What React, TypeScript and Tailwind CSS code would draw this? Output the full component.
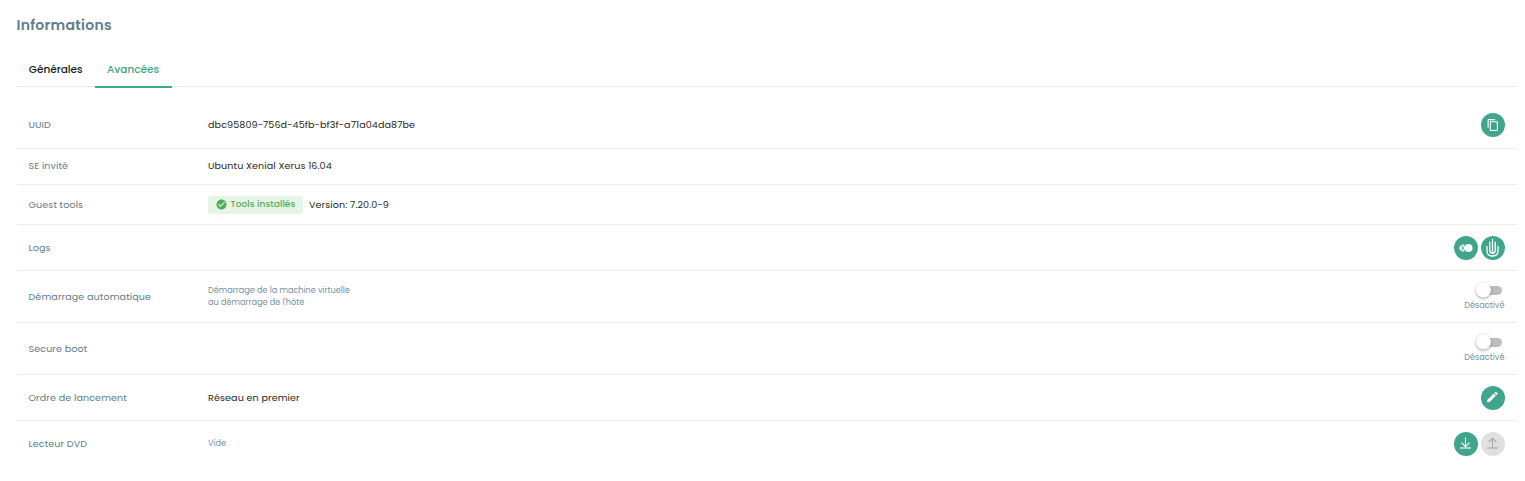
import type { ReactNode } from 'react';
import { MdOutlineContentCopy, MdEdit, MdCheckCircle } from 'react-icons/md';

function RoundButton({ label, disabled = false, children }: { label: string; disabled?: boolean; children: ReactNode }) {
  return (
    <button
      aria-label={label}
      disabled={disabled}
      className={`flex size-6 items-center justify-center rounded-full ${disabled ? 'bg-[#e0e0e0] text-[#a9a9a9]' : 'bg-[#40a58d] text-white'}`}
    >
      {children}
    </button>
  );
}

function Toggle() {
  return (
    <div className="flex w-10 flex-col items-end">
      <div className="mr-[3px] flex h-4 w-[26.5px] items-center">
        <span className="z-10 size-[15px] shrink-0 -translate-y-[0.5px] rounded-full bg-white shadow-[0_1px_3px_rgba(0,0,0,0.38)]" />
        <span className="-ml-2 h-[9px] w-5 rounded-full bg-[#bdbdbd]" />
      </div>
      <span className="mt-px mr-[0.5px] whitespace-nowrap text-[8.2px] leading-3 tracking-normal text-[#78909c]">Désactivé</span>
    </div>
  );
}

function Row({ label, height, last = false, children, actions }: {
  label: string; height: string; last?: boolean; children?: ReactNode; actions?: ReactNode;
}) {
  return (
    <div className={`flex items-center pl-3 pr-3 ${height} ${last ? '' : 'border-b border-[#ececec]'}`}>
      <div className="w-[179.5px] shrink-0 whitespace-nowrap text-[#607d8b]">{label}</div>
      <div className="flex flex-1 items-center whitespace-nowrap text-[#262626]">{children}</div>
      <div className="flex items-center gap-[3px]">{actions}</div>
    </div>
  );
}

function DiscIcon() {
  return (
    <svg width="14" height="10" viewBox="0 0 14 10">
      <circle cx="4" cy="5" r="3.6" fill="white" />
      <path d="M2 2 L5.8 8 M5.8 2 L2 8" stroke="#40a58d" strokeWidth="0.8" />
      <circle cx="9.6" cy="5" r="3.9" fill="white" />
    </svg>
  );
}

function HandIcon() {
  return (
    <svg width="14" height="20" viewBox="0 0 14 20" fill="none" stroke="white" strokeWidth="1.3" strokeLinecap="round">
      <path d="M1 8.4 V12.5 Q1 18 6.5 18 Q12 18 12 12.5 V8.4" />
      <path d="M3.8 4.2 V12.4 Q3.8 15.2 6.5 15.2 Q9.2 15.2 9.2 12.4 V4.2 M6.5 1.5 V14.8" />
    </svg>
  );
}

function ArrowIcon({ up = false }: { up?: boolean }) {
  return (
    <svg width="12" height="14" viewBox="0 0 12 14" fill="none" stroke="currentColor" strokeWidth="1.1">
      <path d={up ? 'M5.5 11 V1.3 M1.8 5 L5.5 1.3 L9.2 5' : 'M5.5 .5 V9.5 M1.5 5.6 L5.5 9.6 L9.5 5.6'} />
      <path d="M0 11 H11" strokeWidth="1.5" strokeOpacity=".75" />
    </svg>
  );
}

export default function App() {
  return (
    <main className="h-[481px] w-full bg-white pl-[16.5px] pr-2 font-['Poppins','Inter',sans-serif] text-[9.55px] leading-[14px] tracking-[0.11px]">
      <h1 className="pt-[14px] text-[14px] font-semibold leading-[23px] tracking-[0.29px] text-[#607d8b]">Informations</h1>
      <nav className="mt-[14px] flex h-9 border-b border-[#e8e8e8] text-[10.5px] font-medium tracking-normal text-[#1a1a27]">
        <button className="h-9 w-[78.5px] pt-px text-center">Générales</button>
        <button className="h-[37px] w-[77px] shrink-0 border-b-2 border-[#40a58d] pt-[2.5px] pr-px text-center text-[#40a58d]">Avancées</button>
      </nav>
      <div className="pt-[15px]">
        <Row label="UUID" height="h-[47px]" actions={<RoundButton label="Copier"><MdOutlineContentCopy size={13} className="-translate-x-[0.5px] -translate-y-[0.5px]" /></RoundButton>}>
          <span>dbc95809-756d-45fb-bf3f-a71a04da87be</span>
        </Row>
        <Row label="SE invité" height="h-9 pb-px"><span>Ubuntu Xenial Xerus 16.04</span></Row>
        <Row label="Guest tools" height="h-10">
          <span className="flex h-[18px] w-[95px] items-center rounded-[3px] bg-[#e7f5e8] pl-[7.5px] text-[9px] font-medium tracking-[0.08px] text-[#4caf50]">
            <MdCheckCircle size={12} className="mr-[3px] -translate-x-[0.5px] -translate-y-[0.5px]" /><span className="pb-px">Tools installés</span>
          </span>
          <span className="ml-1.5">Version: 7.20.0-9</span>
        </Row>
        <Row label="Logs" height="h-[46px]" actions={<><RoundButton label="Xen Orchestra"><DiscIcon /></RoundButton><RoundButton label="Logs"><HandIcon /></RoundButton></>} />
        <Row label="Démarrage automatique" height="h-[52px]" actions={<Toggle />}>
          <p className="pb-px text-[8.2px] leading-3 tracking-[-0.02px] text-[#78909c]"><span>Démarrage de la machine virtuelle</span><br /><span>au démarrage de l'hôte</span></p>
        </Row>
        <Row label="Secure boot" height="h-[52px]" actions={<Toggle />} />
        <Row label="Ordre de lancement" height="h-[46px]" actions={<RoundButton label="Modifier"><MdEdit size={14} className="-translate-x-[0.5px] -translate-y-px" /></RoundButton>}><span>Réseau en premier</span></Row>
        <Row label="Lecteur DVD" height="h-[46px]" last actions={<><RoundButton label="Insérer"><ArrowIcon /></RoundButton><RoundButton label="Éjecter" disabled><ArrowIcon up /></RoundButton></>}><span className="pb-0.5 text-[8.2px] tracking-normal text-[#78909c]">Vide</span></Row>
      </div>
    </main>
  );
}
